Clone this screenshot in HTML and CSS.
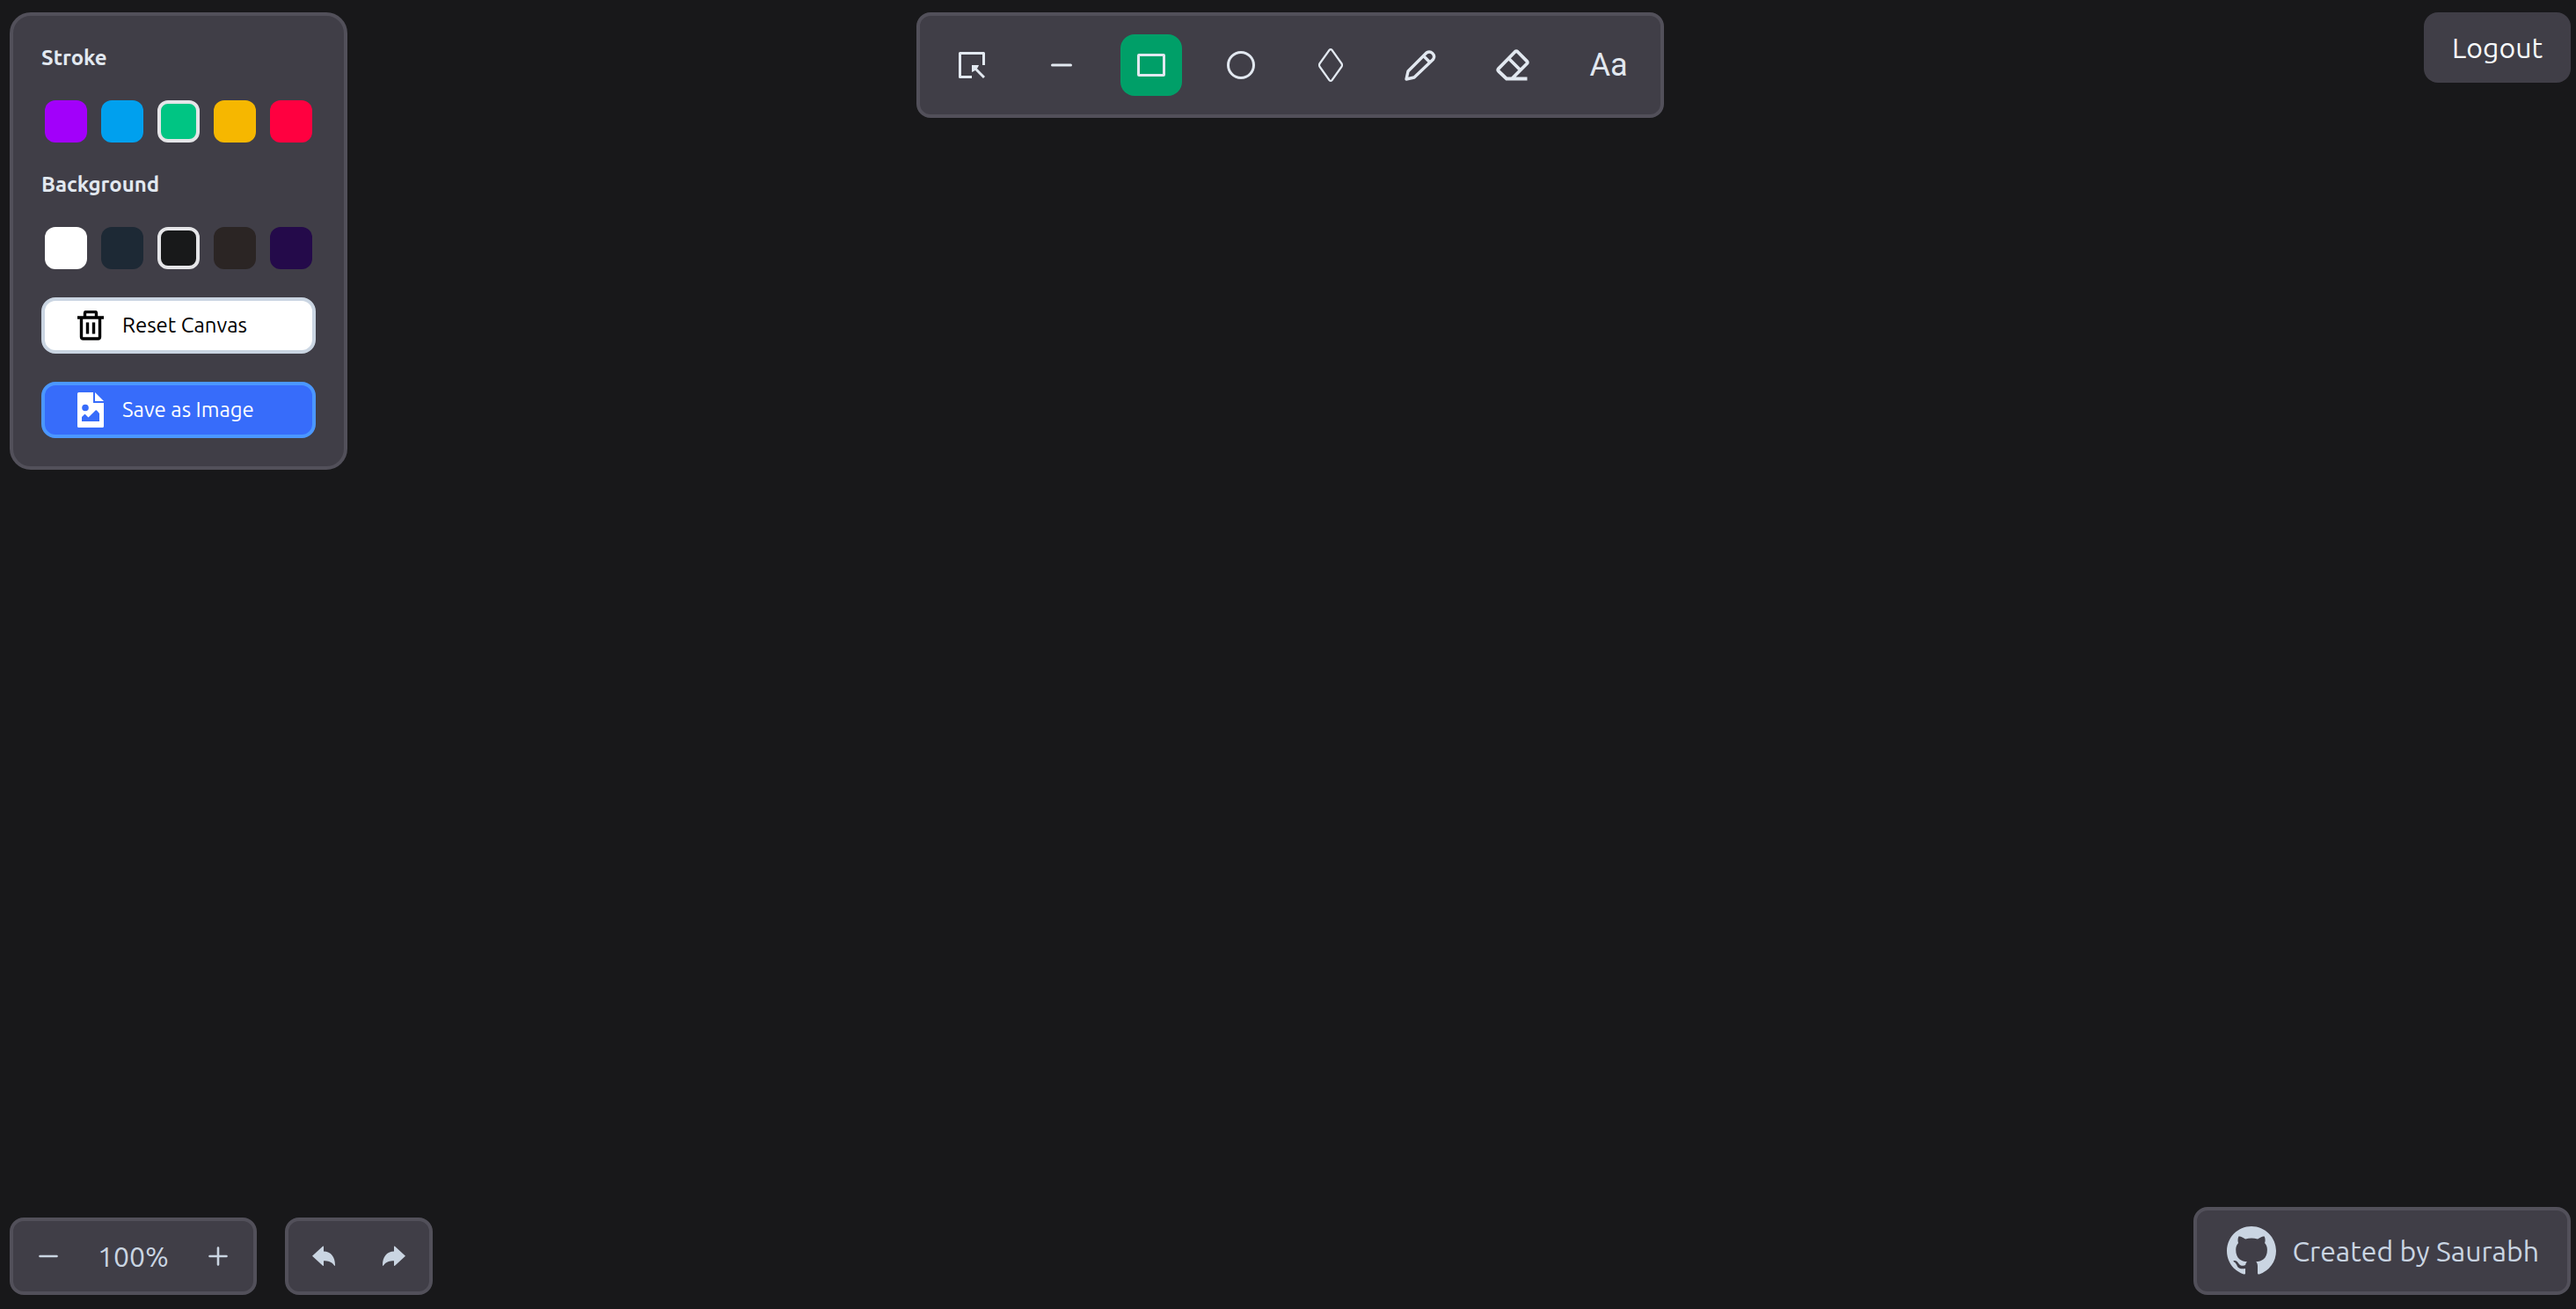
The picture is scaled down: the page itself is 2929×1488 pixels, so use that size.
FILE: index.html
```html
<!DOCTYPE html>
<html lang="en">
<head>
<meta charset="utf-8">
<meta name="viewport" content="width=device-width, initial-scale=1">
<title>Drawing board</title>
<link rel="stylesheet" href="styles.css">
</head>
<body>
<main class="board">
  <div class="row row-top">
    <section class="panel style-panel" aria-label="Style">
      <h2 class="panel-title" id="stroke-title">Stroke</h2>
      <div class="swatches" role="radiogroup" aria-labelledby="stroke-title">
        <input class="swatch purple" type="radio" name="stroke" aria-label="Purple">
        <input class="swatch sky" type="radio" name="stroke" aria-label="Sky blue">
        <input class="swatch green" type="radio" name="stroke" aria-label="Green" checked>
        <input class="swatch amber" type="radio" name="stroke" aria-label="Amber">
        <input class="swatch red" type="radio" name="stroke" aria-label="Red">
      </div>
      <h2 class="panel-title" id="background-title">Background</h2>
      <div class="swatches" role="radiogroup" aria-labelledby="background-title">
        <input class="swatch white" type="radio" name="background" aria-label="White">
        <input class="swatch slate" type="radio" name="background" aria-label="Slate">
        <input class="swatch black" type="radio" name="background" aria-label="Black" checked>
        <input class="swatch brown" type="radio" name="background" aria-label="Brown">
        <input class="swatch indigo" type="radio" name="background" aria-label="Indigo">
      </div>
      <button class="action reset" type="button">
        <svg width="30" height="34" viewBox="0 0 30 34" fill="none" stroke="currentColor" stroke-width="3.400" aria-hidden="true"><path d="M0 8h30M8.500 8V3q0-1.500 1.500-1.500h10q1.500 0 1.500 1.500v5M4.500 8v22q0 2 2 2h17q2 0 2-2V8M11.500 13.500v13M18.500 13.500v13"/></svg>
        Reset Canvas
      </button>
      <button class="action save" type="button">
        <svg width="30" height="40" viewBox="0 0 30 40" fill="currentColor" aria-hidden="true"><path fill-rule="evenodd" d="M1.500 0H18v12h12v26.500q0 1.500-1.500 1.500h-27Q0 40 0 38.500v-37Q0 0 1.500 0zM9 13.700a3.800 3.800 0 1 0 0 7.600a3.800 3.800 0 1 0 0-7.600zM5 33h20v-9l-3-3.500q-.7-.7-1.400 0L12.500 28.500 9.200 25.200q-.7-.7-1.400 0L5 28z"/><path d="M20 0l10 10H20z"/></svg>
        Save as Image
      </button>
    </section>

    <nav class="panel toolbar" aria-label="Tools">
      <button class="tool" type="button" aria-label="Select"><svg width="30" height="30" viewBox="0 0 30 30" fill="none" stroke="currentColor" stroke-width="3" aria-hidden="true"><path stroke-linejoin="round" d="M28.500 15V1.500h-27v27H15"/><path d="M19 19l10 10"/><path fill="currentColor" stroke="none" d="M15 15h8l-1.200 2.800-4 4L15 23z"/></svg></button>
      <button class="tool" type="button" aria-label="Line"><svg width="24" height="4" viewBox="0 0 24 4" stroke="currentColor" stroke-width="3" stroke-linecap="round" aria-hidden="true"><path d="M1.500 2h21"/></svg></button>
      <button class="tool active" type="button" aria-label="Rectangle" aria-pressed="true"><svg width="32" height="26" viewBox="0 0 32 26" fill="none" stroke="currentColor" stroke-width="3" aria-hidden="true"><rect x="1.500" y="1.500" width="29" height="23" rx=".5"/></svg></button>
      <button class="tool" type="button" aria-label="Ellipse"><svg width="32" height="32" viewBox="0 0 32 32" fill="none" stroke="currentColor" stroke-width="3" aria-hidden="true"><circle cx="16" cy="16" r="14.500"/></svg></button>
      <button class="tool" type="button" aria-label="Diamond"><svg width="28" height="38" viewBox="0 0 28 38" fill="none" stroke="currentColor" stroke-width="2.200" aria-hidden="true"><path d="M12.400 2q1.600-1.800 3.200 0l10.700 15q1.400 2 0 4L15.600 36q-1.600 1.800-3.200 0L1.700 21q-1.400-2 0-4z"/></svg></button>
      <button class="tool" type="button" aria-label="Pencil"><svg width="36" height="36" viewBox="0 0 36 36" fill="none" stroke="currentColor" stroke-width="3.400" stroke-linejoin="round" aria-hidden="true"><path d="M2 34l2-9L25 4a5.400 5.400 0 0 1 7.500 7.500L11 32zM21.500 7.500l7 7"/></svg></button>
      <button class="tool tool-eraser" type="button" aria-label="Eraser"><svg width="38" height="36" viewBox="0 0 38 36" fill="none" stroke="currentColor" stroke-width="3.800" stroke-linejoin="round" aria-hidden="true"><path d="M35.500 33.500H12L3 25q-1.500-1.600 0-3.200L21.500 3q1.600-1.500 3.200 0L35 13.300q1.500 1.600 0 3.200L18 33.500M14.500 10.500l13 13"/></svg></button>
      <button class="tool tool-text" type="button" aria-label="Text">Aa</button>
    </nav>

    <button class="logout" type="button">Logout</button>
  </div>

  <div class="row row-bottom">
    <div class="controls">
      <div class="panel control-group">
        <button class="control" type="button" aria-label="Zoom out"><svg width="22" height="22" viewBox="0 0 22 22" stroke="currentColor" stroke-width="2.600" stroke-linecap="round" aria-hidden="true"><path d="M1.500 11h19"/></svg></button>
        <output class="zoom">100%</output>
        <button class="control" type="button" aria-label="Zoom in"><svg width="22" height="22" viewBox="0 0 22 22" stroke="currentColor" stroke-width="2.600" stroke-linecap="round" aria-hidden="true"><path d="M1.500 11h19M11 1.500v19"/></svg></button>
      </div>
      <div class="panel control-group">
        <button class="control" type="button" aria-label="Undo"><svg width="26" height="24" viewBox="0 0 26 24" fill="currentColor" aria-hidden="true"><path d="M0 11.700L12 .8q1-.8 1 .5V6.500C21.500 6.500 26 13 26 22q0 1.500-1 .5C22 18 18 17.200 13 17.200v5q0 1.200-1 .5z"/></svg></button>
        <button class="control" type="button" aria-label="Redo"><svg width="26" height="24" viewBox="0 0 26 24" fill="currentColor" aria-hidden="true"><path d="M26 11.700L14 .8q-1-.8-1 .5V6.500C4.500 6.500 0 13 0 22q0 1.500 1 .5C4 18 8 17.200 13 17.200v5q0 1.200 1 .5z"/></svg></button>
      </div>
    </div>
    <a class="panel credit" href="#">
      <svg class="credit-logo" width="60" height="56" viewBox="0 0 16 16" fill="currentColor" aria-hidden="true"><path d="M8 0C3.580 0 0 3.580 0 8c0 3.540 2.290 6.530 5.470 7.590.4.07.55-.17.55-.38 0-.19-.01-.82-.01-1.490-2.010.37-2.530-.49-2.690-.94-.09-.23-.48-.94-.82-1.130-.28-.15-.68-.52-.01-.53.63-.01 1.080.58 1.230.82.72 1.210 1.870.87 2.330.66.07-.52.28-.87.51-1.070-1.780-.2-3.640-.89-3.640-3.950 0-.87.31-1.590.82-2.150-.08-.2-.36-1.020.08-2.120 0 0 .67-.21 2.200.82.64-.18 1.320-.27 2-.27.68 0 1.360.09 2 .27 1.530-1.040 2.200-.82 2.200-.82.44 1.100.16 1.920.08 2.120.51.56.82 1.270.82 2.150 0 3.070-1.870 3.750-3.650 3.950.29.25.54.73.54 1.480 0 1.070-.01 1.930-.01 2.200 0 .21.15.46.55.38A8.013 8.013 0 0 0 16 8c0-4.420-3.580-8-8-8z"/></svg>
      Created by Saurabh
    </a>
  </div>
</main>
</body>
</html>
```
FILE: styles.css
```css
* {
  box-sizing: border-box;
}

body {
  margin: 0;
  background: #18181a;
  color: #e2e8f0;
  font-family: Ubuntu, "Noto Sans", "Open Sans", sans-serif;
  font-weight: 400;
}

button {
  margin: 0;
  padding: 0;
  border: 0;
  background: none;
  color: inherit;
  font: inherit;
  cursor: pointer;
}

svg {
  display: block;
  flex: none;
}

.board {
  display: flex;
  flex-direction: column;
  justify-content: space-between;
  gap: 32px;
  min-height: 100vh;
  padding: 14px 6px 16px 11px;
}

.row-top {
  display: grid;
  grid-template-columns: 1fr auto 1fr;
  align-items: start;
}

.row-bottom {
  display: flex;
  justify-content: space-between;
  align-items: flex-end;
}

.panel {
  border: 4px solid #52505a;
  border-radius: 16px;
  background: #403e47;
}

/* Style panel */
.style-panel {
  display: flex;
  flex-direction: column;
  justify-self: start;
  gap: 32px;
  width: 384px;
  padding: 32px;
  border-radius: 24px;
}

.panel-title {
  margin: 0;
  font-size: 24px;
  line-height: 32px;
  font-weight: 600;
}

.swatches {
  display: flex;
  justify-content: center;
  gap: 16px;
}

.swatch {
  appearance: none;
  width: 48px;
  height: 48px;
  margin: 0;
  border-radius: 12px;
  cursor: pointer;
}

.swatch:checked {
  border: 4px solid #e5e5e8;
}

.purple { background: #a200fa; }
.sky { background: #00a0ee; }
.green { background: #00c583; }
.amber { background: #f6b700; }
.red { background: #ff0040; }
.white { background: #ffffff; }
.slate { background: #1d2935; }
.black { background: #18191a; }
.brown { background: #2b2524; }
.indigo { background: #240a4a; }

.action {
  display: flex;
  align-items: center;
  gap: 21px;
  height: 64px;
  padding: 0 37px;
  border: 4px solid;
  border-radius: 16px;
  font-size: 24px;
  line-height: 32px;
}

.reset {
  border-color: #cad5e2;
  background: #ffffff;
  color: #000000;
}

.save {
  border-color: #4b97ff;
  background: #376cfa;
  color: #ffffff;
}

/* Toolbar */
.toolbar {
  display: flex;
  gap: 32px;
  padding: 21px 24px;
}

.tool {
  display: flex;
  align-items: center;
  justify-content: center;
  width: 70px;
  height: 70px;
  border-radius: 16px;
}

.tool.active {
  background: #009f68;
}

.tool-eraser {
  width: 76px;
}

.tool-text {
  width: 74px;
  padding-left: 4px;
  font-family: Roboto, sans-serif;
  font-size: 36px;
}

.logout {
  justify-self: end;
  padding: 16px 32px;
  border-radius: 16px;
  background: #403e47;
  color: #f8fafc;
  font-size: 32px;
  line-height: 48px;
}

/* Bottom bar */
.controls {
  display: flex;
  gap: 32px;
  color: #cad5e2;
}

.control-group {
  display: flex;
  align-items: center;
}

.control {
  display: flex;
  align-items: center;
  justify-content: center;
  width: 80px;
  height: 80px;
}

.zoom {
  width: 113px;
  font-size: 32px;
  line-height: 48px;
  text-align: center;
}

.credit {
  display: flex;
  align-items: center;
  gap: 16px;
  height: 100px;
  padding: 0 32px;
  color: #cad5e2;
  font-size: 32px;
  line-height: 48px;
  text-decoration: none;
}
```
